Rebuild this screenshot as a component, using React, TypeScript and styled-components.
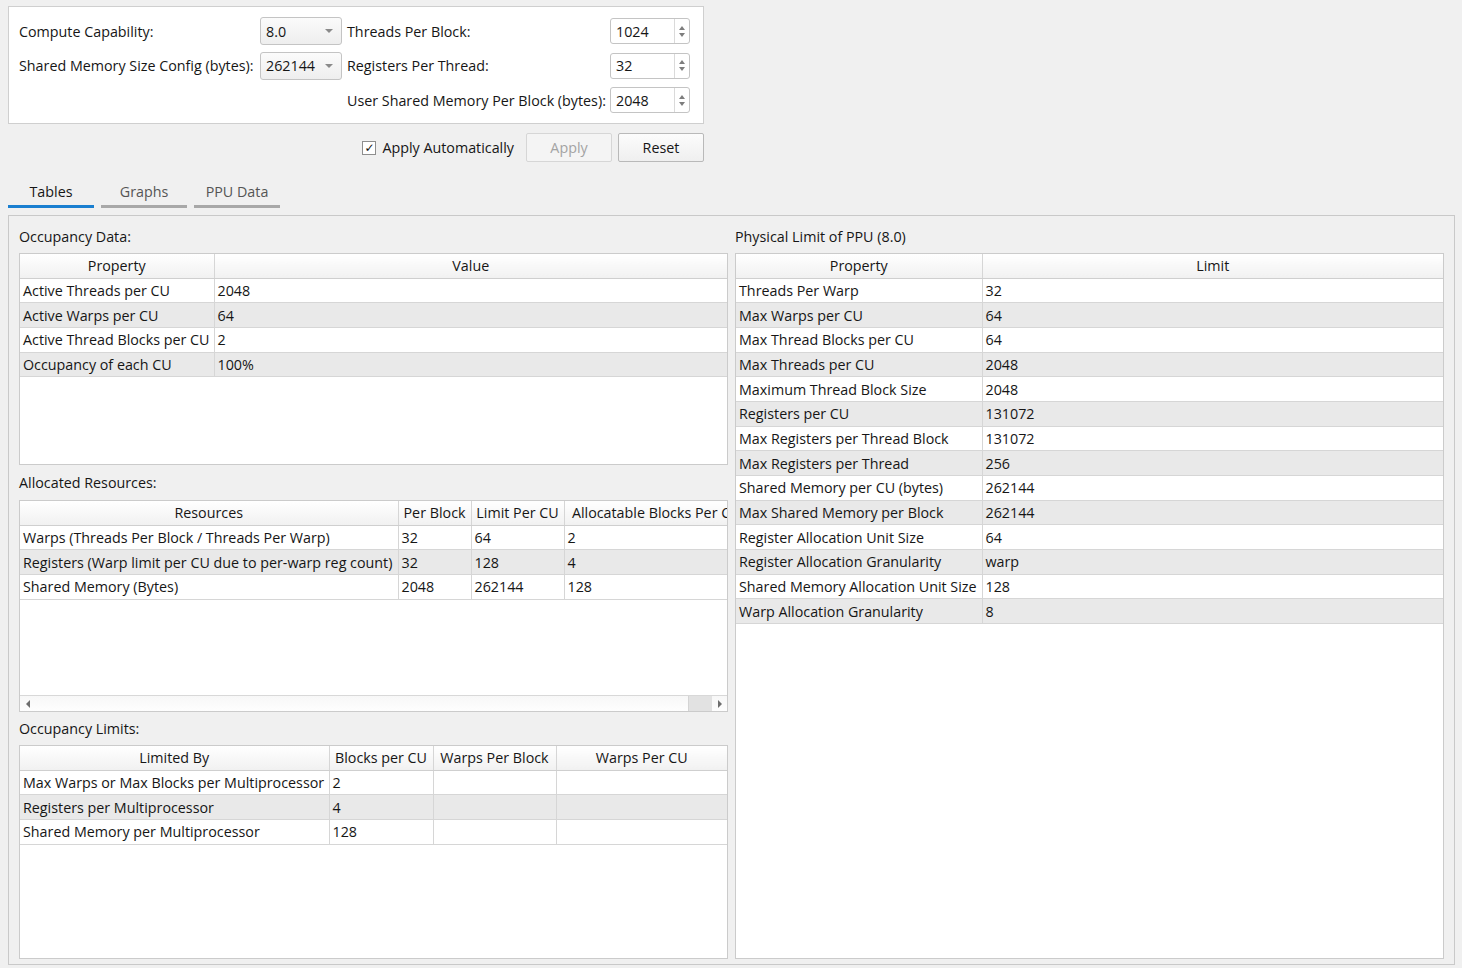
import React from "react";
import styled, { createGlobalStyle } from "styled-components";

const Global = createGlobalStyle`
  html, body { margin: 0; padding: 0; background: #f0f0f0; }
  body { font-family: "Open Sans", "Liberation Sans", Arial, sans-serif; font-size: 14.3px; color: #161616; }
  * { box-sizing: border-box; }
`;

const Page = styled.div`
  width: 1462px;
  height: 968px;
  padding: 6px 7px 3px 8px;
  display: flex;
  flex-direction: column;
  overflow: hidden;
`;

const ConfigBox = styled.div`
  width: 696px;
  height: 119px;
  background: #ffffff;
  border: 1px solid #cfcfcf;
  padding: 10px 0 0 10px;
  display: grid;
  grid-template-columns: 236px 82px 258px 80px;
  grid-auto-rows: 28px;
  column-gap: 5px;
  row-gap: 6.5px;
  align-items: center;
`;

const FieldLabel = styled.span<{ $col?: number }>`
  grid-column: ${(p) => p.$col ?? "auto"};
  white-space: nowrap;
`;

const Combo = styled.div`
  height: 28px;
  border: 1px solid #c4c4c4;
  border-radius: 3px;
  background: linear-gradient(#fbfbfb, #eeeeee);
  display: flex;
  align-items: center;
  justify-content: space-between;
  padding: 0 8px 0 5px;
`;

const ComboArrow = styled.span`
  width: 0;
  height: 0;
  border-left: 4px solid transparent;
  border-right: 4px solid transparent;
  border-top: 4px solid #8a8a8a;
`;

const Spin = styled.div<{ $col?: number }>`
  grid-column: ${(p) => p.$col ?? "auto"};
  height: 26px;
  border: 1px solid #c4c4c4;
  border-radius: 3px;
  background: #ffffff;
  display: flex;
  align-items: stretch;
`;

const SpinValue = styled.span`
  flex: 1;
  display: flex;
  align-items: center;
  padding-left: 5px;
`;

const SpinButtons = styled.span`
  width: 15px;
  border-left: 1px solid #dadada;
  display: flex;
  flex-direction: column;
  align-items: center;
  justify-content: center;
  gap: 3px;
`;

const Tri = styled.span<{ $up?: boolean }>`
  width: 0;
  height: 0;
  border-left: 3.5px solid transparent;
  border-right: 3.5px solid transparent;
  ${(p) => (p.$up ? "border-bottom: 4px solid #7d7d7d;" : "border-top: 4px solid #7d7d7d;")}
`;

const ActionRow = styled.div`
  width: 696px;
  display: flex;
  justify-content: flex-end;
  align-items: center;
  gap: 6px;
  margin-top: 9px;
`;

const CheckWrap = styled.label`
  display: flex;
  align-items: center;
  gap: 6px;
  margin-right: 6px;
`;

const CheckBox = styled.span`
  width: 14px;
  height: 14px;
  border: 1px solid #8e8e8e;
  background: #fff;
  display: flex;
  align-items: center;
  justify-content: center;
  font-family: "DejaVu Sans", sans-serif;
  font-size: 12px;
  line-height: 1;
  color: #111;
`;

const Button = styled.button<{ $disabled?: boolean }>`
  width: 86px;
  height: 29px;
  font-family: inherit;
  font-size: 14.3px;
  border-radius: 2px;
  border: 1px solid ${(p) => (p.$disabled ? "#d6d6d6" : "#b9b9b9")};
  background: ${(p) => (p.$disabled ? "#f4f4f4" : "linear-gradient(#fcfcfc, #efefef)")};
  color: ${(p) => (p.$disabled ? "#a3a3a3" : "#161616")};
  padding: 0;
`;

const Tabs = styled.div`
  display: flex;
  gap: 7px;
  margin-top: 17px;
  height: 29px;
`;

const Tab = styled.div<{ $active?: boolean }>`
  width: 86px;
  display: flex;
  align-items: flex-start;
  justify-content: center;
  padding-top: 3px;
  color: ${(p) => (p.$active ? "#161616" : "#555")};
  border-bottom: 3px solid ${(p) => (p.$active ? "#1a7fd0" : "#a8a8a8")};
`;

const MainPanel = styled.div`
  margin-top: 7px;
  width: 1447px;
  height: 750px;
  border: 1px solid #c9c9c9;
  padding: 10px 10px 6px 10px;
  display: grid;
  grid-template-columns: 709px 709px;
  column-gap: 7px;
`;

const Column = styled.div`
  display: flex;
  flex-direction: column;
`;

const SectionLabel = styled.div<{ $h: number; $pb?: number }>`
  height: ${(p) => p.$h}px;
  padding-bottom: ${(p) => p.$pb ?? 0}px;
  display: flex;
  align-items: center;
  white-space: nowrap;
`;

const Frame = styled.div<{ $h: number }>`
  height: ${(p) => p.$h}px;
  background: #ffffff;
  border: 1px solid #cbcbcb;
  display: flex;
  flex-direction: column;
  overflow: hidden;
`;

const Viewport = styled.div`
  flex: 1;
  overflow: hidden;
`;

const Table = styled.table<{ $w?: number }>`
  border-collapse: collapse;
  table-layout: fixed;
  width: ${(p) => (p.$w ? `${p.$w}px` : "100%")};
`;

const Th = styled.th`
  height: 24px;
  font-weight: normal;
  text-align: center;
  white-space: nowrap;
  overflow: hidden;
  padding: 0 4px;
  background: linear-gradient(#ffffff, #f1f1f1);
  border-right: 1px solid #d6d6d6;
  border-bottom: 1px solid #cfcfcf;
  &:last-child { border-right: none; }
`;

const Tr = styled.tr<{ $alt?: boolean }>`
  background: ${(p) => (p.$alt ? "#e9e9e9" : "#ffffff")};
`;

const Td = styled.td`
  height: 24.7px;
  padding: 0 3px;
  white-space: nowrap;
  overflow: hidden;
  border-right: 1px solid #d6d6d6;
  border-bottom: 1px solid #d6d6d6;
  &:last-child { border-right: none; }
`;

const HScroll = styled.div`
  height: 16px;
  border-top: 1px solid #d8d8d8;
  background: linear-gradient(#f7f7f7, #fefefe);
  display: flex;
  align-items: stretch;
`;

const ScrollArrow = styled.div<{ $right?: boolean }>`
  width: 15px;
  display: flex;
  align-items: center;
  justify-content: center;
  &::before {
    content: "";
    width: 0;
    height: 0;
    border-top: 4px solid transparent;
    border-bottom: 4px solid transparent;
    ${(p) => (p.$right ? "border-left: 4px solid #6e6e6e;" : "border-right: 4px solid #6e6e6e;")}
  }
`;

const ScrollTrack = styled.div`
  flex: 1;
  display: flex;
  justify-content: flex-end;
`;

const ScrollThumb = styled.div`
  width: 24px;
  background: #e2e2e2;
  border-left: 1px solid #d4d4d4;
`;

type TableProps = {
  cols: number[];
  headers: string[];
  rows: string[][];
  width?: number;
};

function DataTable({ cols, headers, rows, width }: TableProps) {
  return (
    <Table $w={width}>
      <colgroup>
        {cols.map((c, i) => (
          <col key={i} style={c ? { width: c } : undefined} />
        ))}
      </colgroup>
      <thead>
        <tr>
          {headers.map((h) => (
            <Th key={h}>{h}</Th>
          ))}
        </tr>
      </thead>
      <tbody>
        {rows.map((r, i) => (
          <Tr key={i} $alt={i % 2 === 1}>
            {r.map((c, j) => (
              <Td key={j}>{c}</Td>
            ))}
          </Tr>
        ))}
      </tbody>
    </Table>
  );
}

const occupancy = [
  ["Active Threads per CU", "2048"],
  ["Active Warps per CU", "64"],
  ["Active Thread Blocks per CU", "2"],
  ["Occupancy of each CU", "100%"],
];

const allocated = [
  ["Warps (Threads Per Block / Threads Per Warp)", "32", "64", "2"],
  ["Registers (Warp limit per CU due to per-warp reg count)", "32", "128", "4"],
  ["Shared Memory (Bytes)", "2048", "262144", "128"],
];

const limits = [
  ["Max Warps or Max Blocks per Multiprocessor", "2", "", ""],
  ["Registers per Multiprocessor", "4", "", ""],
  ["Shared Memory per Multiprocessor", "128", "", ""],
];

const physical = [
  ["Threads Per Warp", "32"],
  ["Max Warps per CU", "64"],
  ["Max Thread Blocks per CU", "64"],
  ["Max Threads per CU", "2048"],
  ["Maximum Thread Block Size", "2048"],
  ["Registers per CU", "131072"],
  ["Max Registers per Thread Block", "131072"],
  ["Max Registers per Thread", "256"],
  ["Shared Memory per CU (bytes)", "262144"],
  ["Max Shared Memory per Block", "262144"],
  ["Register Allocation Unit Size", "64"],
  ["Register Allocation Granularity", "warp"],
  ["Shared Memory Allocation Unit Size", "128"],
  ["Warp Allocation Granularity", "8"],
];

function SpinBox({ value, col }: { value: string; col?: number }) {
  return (
    <Spin $col={col}>
      <SpinValue>{value}</SpinValue>
      <SpinButtons>
        <Tri $up />
        <Tri />
      </SpinButtons>
    </Spin>
  );
}

export default function App() {
  return (
    <>
      <Global />
      <Page>
        <ConfigBox>
          <FieldLabel>Compute Capability:</FieldLabel>
          <Combo>
            <span>8.0</span>
            <ComboArrow />
          </Combo>
          <FieldLabel>Threads Per Block:</FieldLabel>
          <SpinBox value="1024" />
          <FieldLabel>Shared Memory Size Config (bytes):</FieldLabel>
          <Combo>
            <span>262144</span>
            <ComboArrow />
          </Combo>
          <FieldLabel>Registers Per Thread:</FieldLabel>
          <SpinBox value="32" />
          <FieldLabel $col={3}>User Shared Memory Per Block (bytes):</FieldLabel>
          <SpinBox value="2048" col={4} />
        </ConfigBox>

        <ActionRow>
          <CheckWrap>
            <CheckBox>✓</CheckBox>
            <span>Apply Automatically</span>
          </CheckWrap>
          <Button $disabled>Apply</Button>
          <Button>Reset</Button>
        </ActionRow>

        <Tabs>
          <Tab $active>Tables</Tab>
          <Tab>Graphs</Tab>
          <Tab>PPU Data</Tab>
        </Tabs>

        <MainPanel>
          <Column>
            <SectionLabel $h={27} $pb={6}>Occupancy Data:</SectionLabel>
            <Frame $h={212}>
              <Viewport>
                <DataTable cols={[194, 0]} headers={["Property", "Value"]} rows={occupancy} />
              </Viewport>
            </Frame>
            <SectionLabel $h={35}>Allocated Resources:</SectionLabel>
            <Frame $h={212}>
              <Viewport>
                <DataTable
                  width={728}
                  cols={[378, 73, 93, 184]}
                  headers={["Resources", "Per Block", "Limit Per CU", "Allocatable Blocks Per CU"]}
                  rows={allocated}
                />
              </Viewport>
              <HScroll>
                <ScrollArrow />
                <ScrollTrack>
                  <ScrollThumb />
                </ScrollTrack>
                <ScrollArrow $right />
              </HScroll>
            </Frame>
            <SectionLabel $h={33}>Occupancy Limits:</SectionLabel>
            <Frame $h={214}>
              <Viewport>
                <DataTable
                  cols={[309, 104, 123, 0]}
                  headers={["Limited By", "Blocks per CU", "Warps Per Block", "Warps Per CU"]}
                  rows={limits}
                />
              </Viewport>
            </Frame>
          </Column>
          <Column>
            <SectionLabel $h={27} $pb={6}>Physical Limit of PPU (8.0)</SectionLabel>
            <Frame $h={706}>
              <Viewport>
                <DataTable cols={[246, 0]} headers={["Property", "Limit"]} rows={physical} />
              </Viewport>
            </Frame>
          </Column>
        </MainPanel>
      </Page>
    </>
  );
}
